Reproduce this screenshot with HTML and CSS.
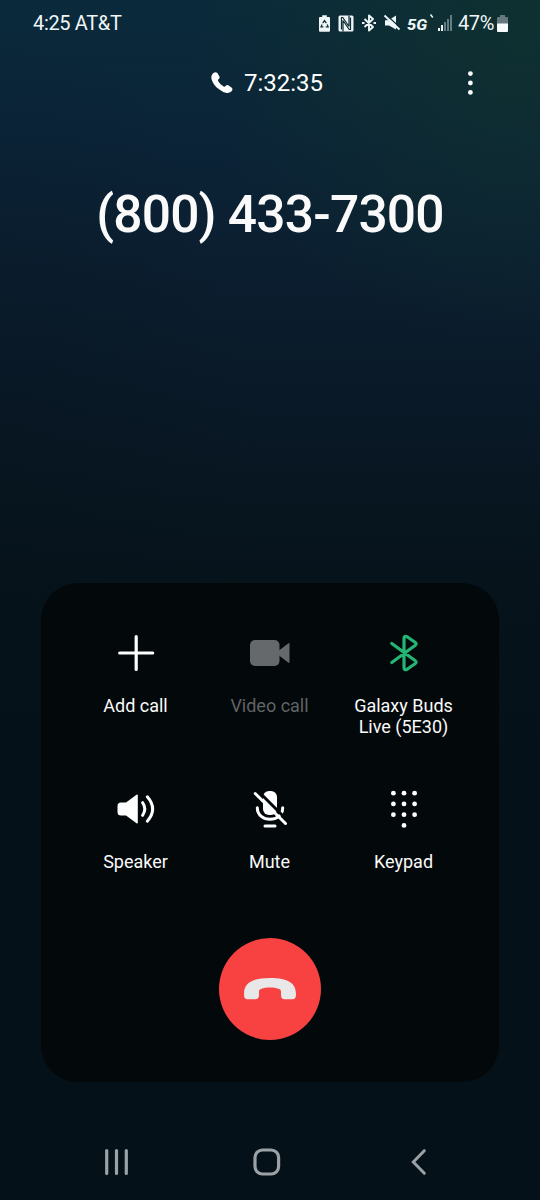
FILE: index.html
```html
<!DOCTYPE html>
<html lang="en">
<head>
<meta charset="utf-8">
<title>Call</title>
<link rel="stylesheet" href="styles.css">
</head>
<body>
<main class="screen">
  <header class="status">
    <span class="status-left">4:25 AT&amp;T</span>
    <div class="status-right">
      <svg class="s-saver" width="11" height="17" viewBox="0 0 12 18"><path fill="#eef6f7" d="M3.500 0h5v2H11q1 0 1 1v14q0 1-1 1H1q-1 0-1-1V3q0-1 1-1h2.500z"/><path fill="none" stroke="#0b2b35" stroke-width="1.300" d="M4 8.500 6 5.800l2 2.700M9 10l1 2.600H7.400M4.800 12.600H2.200L3.300 10"/></svg>
      <svg class="s-nfc" width="16" height="17" viewBox="0 0 16 17"><rect x=".5" y=".5" width="15" height="16" rx="1.500" fill="#eef6f7"/><path stroke="#0b2b35" stroke-width="1.200" fill="none" d="M3.500 14.500V2.500h1.300L11 11.500M12.500 2.500v12h-1.300L5 5.500M5 5.500v11M11 11.500V.5"/></svg>
      <svg class="s-bt" width="14" height="18" viewBox="0 0 14 18"><path fill="none" stroke="#eef6f7" stroke-width="1.900" stroke-linejoin="round" d="M2.500 5l8.500 8-4 3.500v-15L11 5l-8.500 8"/><path fill="#eef6f7" d="M0 8h2.500v2H0zM11.500 8H14v2h-2.500z"/></svg>
      <svg class="s-mute" width="16" height="16" viewBox="0 0 16 16"><path fill="#eef6f7" d="M1 5.200h3.500L12 .5v14L5 10.500H1z"/><path stroke="#0b2b35" stroke-width="1.300" d="M1.800-.5 16 12.500"/><path stroke="#eef6f7" stroke-width="1.900" d="M.5.500 15.500 14.500"/></svg>
      <span class="net">5G</span>
      <svg class="s-tick" width="4" height="5" viewBox="0 0 4 5"><path stroke="#eef6f7" stroke-width="1.500" d="M.5.500 2.800 3.500"/></svg>
      <svg class="s-signal" width="14" height="16" viewBox="0 0 14 16"><path fill="#eef6f7" d="M0 13h2v3H0zM3 10h2v6H3z"/><path fill="#637d84" d="M6 7h2v9H6zM9 4h2v12H9zM12 0h2v16h-2z"/></svg>
      <span class="pct">47%</span>
      <svg class="s-batt" width="11" height="17" viewBox="0 0 11 17"><path fill="#66797e" d="M3 0h5v2h2q1 0 1 1v6H0V3q0-1 1-1h2z"/><path fill="#f6fafa" d="M0 8.500h11V16q0 1-1 1H1q-1 0-1-1z"/></svg>
    </div>
  </header>

  <section class="call-info">
    <div class="timer">
      <svg width="22" height="22" viewBox="0 0 22 22"><path fill="#fff" d="M1.300 2.200C2.600.2 5.100-.5 6.400 1.100L8.300 4.200c.7 1.300.2 2.100-.8 3-.7.700-.7 1.200-.2 2.100 1.300 2.300 3 3.900 5.300 5.100.8.400 1.300.3 1.900-.3 1-1 2-1.300 3.100-.6l2.900 1.900c1.500 1.200 1.100 2.900-.2 4.100-2.200 2-5.500 1.700-8.800-.1C6.500 17.100 3 13.300 1.300 9.300.1 6.400-.1 4.300 1.300 2.200z"/></svg>
      <span>7:32:35</span>
    </div>
    <svg class="more" width="6" height="24" viewBox="0 0 6 24"><g fill="#fff"><circle cx="3.400" cy="2.600" r="2.400"/><circle cx="3.400" cy="12" r="2.400"/><circle cx="3.400" cy="21.400" r="2.400"/></g></svg>
  </section>
  <h1 class="number">(800) 433-7300</h1>

  <section class="panel">
    <div class="actions">
      <div class="action">
        <svg width="40" height="40" viewBox="0 0 40 40"><path stroke="#fff" stroke-width="3.200" stroke-linecap="round" d="M20.200 3.500v33M3.700 20h33"/></svg>
        <span>Add call</span>
      </div>
      <div class="action disabled">
        <svg width="40" height="40" viewBox="0 0 40 40"><rect x="0" y="7" width="29.500" height="26" rx="5" fill="#66696b"/><path fill="#66696b" d="M29 17.500 38.500 10.300q1-.6 1 .7v18q0 1.300-1 .7L29 22.500z"/></svg>
        <span>Video call</span>
      </div>
      <div class="action">
        <svg width="40" height="40" viewBox="0 0 40 40"><path fill="none" stroke="#22b573" stroke-width="3.200" stroke-linecap="round" stroke-linejoin="round" d="M7.800 10.500 31 27.500q2.200 1.700 0 3.300L23.500 36q-3.500 2-3.500-1.600V5.600q0-3.600 3.500-1.600L31 9.200q2.200 1.600 0 3.300L7.800 29.500"/></svg>
        <span>Galaxy Buds<br>Live (5E30)</span>
      </div>
      <div class="action">
        <svg width="40" height="40" viewBox="0 0 40 40"><path fill="#fff" d="M1.500 17q0-3.500 3.500-3.500h5L20.500 5.700q1.300-.7 1.300.8v27q0 1.500-1.300.8L10 26.500H5q-3.500 0-3.500-3.500z"/><path fill="none" stroke="#fff" stroke-width="3" stroke-linecap="round" d="M26.600 13.700Q31 20 26.600 26.300M31.300 7.800Q42 20 31.300 32.200"/></svg>
        <span>Speaker</span>
      </div>
      <div class="action">
        <svg width="40" height="40" viewBox="0 0 40 40"><rect x="13" y="2" width="14" height="24" rx="6" fill="#fff"/><path fill="none" stroke="#fff" stroke-width="3" stroke-linecap="round" d="M7.300 18.800C7.300 34 32.700 34 32.700 18.800M15 37h10"/><path stroke="#03080b" stroke-width="3" d="M7.800 1.800 37.800 31.800"/><path stroke="#fff" stroke-width="3" stroke-linecap="round" d="M5.200 4.500 35.500 34.500"/></svg>
        <span>Mute</span>
      </div>
      <div class="action">
        <svg width="40" height="40" viewBox="0 0 40 40"><g fill="#fff"><circle cx="9.400" cy="4.200" r="2.400"/><circle cx="20" cy="4.200" r="2.400"/><circle cx="30.600" cy="4.200" r="2.400"/><circle cx="9.400" cy="14.900" r="2.400"/><circle cx="20" cy="14.900" r="2.400"/><circle cx="30.600" cy="14.900" r="2.400"/><circle cx="9.400" cy="25.700" r="2.400"/><circle cx="20" cy="25.700" r="2.400"/><circle cx="30.600" cy="25.700" r="2.400"/><circle cx="20" cy="36.400" r="2.400"/></g></svg>
        <span>Keypad</span>
      </div>
    </div>
    <div class="hangup">
      <svg width="54" height="24" viewBox="0 0 54 24"><path fill="#e8e8e8" d="M1 17C1 6 9 1 27 1s26 5 26 16c0 4.500-1.500 5.300-4 5.300h-7c-2.700 0-4-1.300-4-4v-3.300c0-2-.7-2.700-2.500-3.300-4.500-1.600-12.500-1.600-17 0-1.800.6-2.500 1.300-2.500 3.300v3.300c0 2.700-1.300 4-4 4H5c-2.500 0-4-.8-4-5.300z"/></svg>
    </div>
  </section>

  <nav class="nav">
    <svg width="24" height="28" viewBox="0 0 24 28"><path stroke="#9ba1a4" stroke-width="3.200" stroke-linecap="round" d="M2.700 2.600v22.800M12.500 2.600v22.800M22.300 2.600v22.800"/></svg>
    <svg class="home" width="28" height="28" viewBox="0 0 28 28"><rect x="2" y="2" width="23.600" height="24" rx="7.500" fill="none" stroke="#9ba1a4" stroke-width="3.200"/></svg>
    <svg width="16" height="28" viewBox="0 0 16 28"><path fill="none" stroke="#9ba1a4" stroke-width="3" stroke-linecap="round" stroke-linejoin="miter" d="M13.300 2.700 2.300 14l11 11.300"/></svg>
  </nav>
</main>
</body>
</html>
```

FILE: styles.css
```css
* { box-sizing: border-box; }
body { margin: 0; font-family: Roboto, "Liberation Sans", sans-serif; color: #fff; background: #041119; }
svg { display: block; flex: none; overflow: visible; }
.screen {
  width: 540px;
  height: 1200px;
  display: flex;
  flex-direction: column;
  overflow: hidden;
  background:
    radial-gradient(ellipse 350px 330px at 540px 20px, rgba(16, 50, 46, .85), rgba(16, 50, 46, 0)),
    radial-gradient(ellipse 260px 450px at 0 460px, rgba(4, 17, 25, .25), rgba(4, 17, 25, 0)),
    linear-gradient(#0a2a3b 0, #0b2438 130px, #0b1d2e 290px, #091825 430px, #06131b 580px, #041118 760px, #041119 1200px);
}
.status {
  height: 46px;
  padding: 0 32px 0 33px;
  display: flex;
  justify-content: space-between;
  align-items: center;
  color: #eef6f7;
  font-size: 20px;
}
.status-left { letter-spacing: -.35px; }
.status-right { display: flex; align-items: center; }
.s-nfc { margin-left: 8px; }
.s-bt { margin-left: 8px; }
.s-mute { margin-left: 8px; }
.net {
  width: 17px;
  margin: 3px 0 0 7px;
  font-size: 14px;
  line-height: 14px;
  font-weight: 800;
  font-style: italic;
  transform: scaleX(1.18);
  transform-origin: left;
}
.s-tick { margin: -14px 0 0 6px; }
.s-signal { margin-left: 4px; }
.pct { width: 37px; margin-left: 6px; letter-spacing: -.4px; }
.s-batt { margin-left: 2px; }
.call-info {
  height: 74px;
  display: flex;
  justify-content: space-between;
  align-items: center;
  padding: 0 67px 0 211px;
}
.timer { display: flex; align-items: center; gap: 11px; font-size: 24px; }
.number { margin: 62px 0 0; font-size: 51.5px; line-height: 66px; font-weight: 500; letter-spacing: -.8px; text-align: center; color: #fafafa; }
.panel {
  margin: 335px 41px 0;
  height: 499px;
  flex: none;
  border-radius: 37px;
  background: #03080b;
  padding: 50px 28px 0 27.5px;
}
.actions { display: grid; grid-template-columns: repeat(3, 134px); grid-auto-rows: 156px; }
.action { display: flex; flex-direction: column; align-items: center; gap: 22px; font-size: 18px; line-height: 21px; text-align: center; color: #fafafa; }
.disabled { color: #606365; }
.hangup {
  width: 102px;
  height: 102px;
  margin: -7px auto 0;
  border-radius: 50%;
  background: #f84242;
  display: flex;
  align-items: center;
  justify-content: center;
}
.nav { margin-top: 66px; padding: 0 113px 0 104px; display: flex; justify-content: space-between; }
.home { margin-right: 5px; }
```
